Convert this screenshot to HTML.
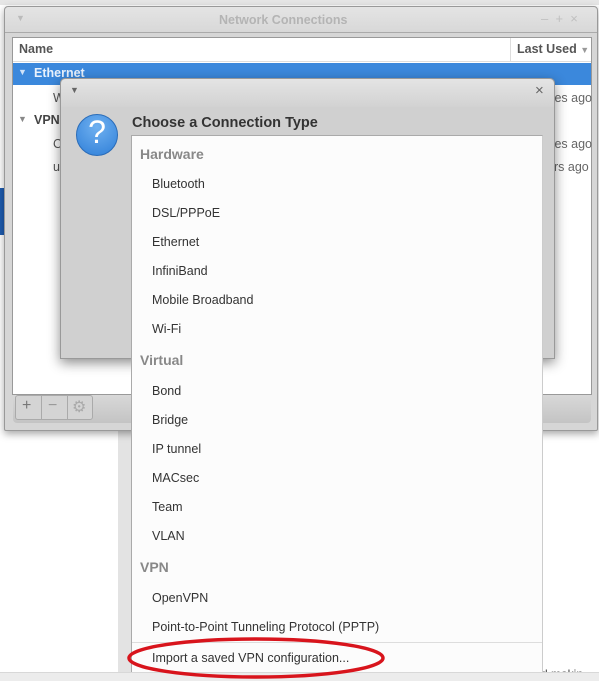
<!DOCTYPE html>
<html><head><meta charset="utf-8"><style>
*{margin:0;padding:0;box-sizing:border-box}
body{width:599px;height:681px;overflow:hidden;background:#fff;position:relative;font-family:"Liberation Sans",sans-serif;font-size:12.5px;color:#333}
.abs{position:absolute}
.t{position:absolute;white-space:nowrap}
</style></head><body>
<div class="abs" style="left:0;top:0;width:599px;height:5px;background:#e6e6e6"></div>
<div class="abs" style="left:118px;top:430px;width:13px;height:242px;background:#e3e3e3"></div>
<div class="abs" style="left:0;top:188px;width:4px;height:47px;background:#1e5cb0"></div>
<div class="t" style="left:541px;top:667px;color:#444;font-size:12px">d makin</div>
<div class="abs" style="left:0;top:672px;width:599px;height:9px;background:#ececec;border-top:1px solid #d8d8d8"></div>
<!-- main window -->
<div class="abs" style="left:4px;top:6px;width:594px;height:425px;background:#d6d6d6;border:1px solid #999;border-radius:4px 4px 2px 2px;box-shadow:0 3px 8px rgba(0,0,0,.35)">
 <div class="abs" style="left:0;top:0;width:592px;height:26px;background:linear-gradient(#e4e4e4,#d8d8d8);border-bottom:1px solid #aaa;border-radius:4px 4px 0 0"></div>
 <div class="t" style="left:11px;top:6px;color:#bbb;font-size:9px">▼</div>
 <div class="t" style="left:214px;top:6px;color:#b4b4b4;font-weight:bold;font-size:12.5px">Network Connections</div>
 <div class="t" style="left:536px;top:4px;color:#c0c0c0;font-size:13px">–&nbsp;&nbsp;+&nbsp;&nbsp;×</div>
 <div class="abs" style="left:7px;top:30px;width:580px;height:358px;background:#fff;border:1px solid #999"></div>
 <div class="abs" style="left:8px;top:31px;width:578px;height:24px;border-bottom:1px solid #ddd"></div>
 <div class="abs" style="left:505px;top:31px;width:1px;height:24px;background:#ddd"></div>
 <div class="t" style="left:14px;top:35px;font-weight:bold;color:#555">Name</div>
 <div class="t" style="left:512px;top:35px;font-weight:bold;color:#555">Last Used <span style="color:#999;font-size:9px">▼</span></div>
 <div class="abs" style="left:8px;top:56px;width:578px;height:22px;background:#3b88dc"></div>
 <div class="t" style="left:13px;top:60px;color:#cfe2f8;font-size:9px">▼</div>
 <div class="t" style="left:29px;top:59px;color:#e8f1fc;font-weight:bold">Ethernet</div>
 <div class="t" style="left:48px;top:84px;color:#555">W</div>
 <div class="t" style="left:13px;top:107px;color:#888;font-size:9px">▼</div>
 <div class="t" style="left:29px;top:106px;font-weight:bold;color:#444">VPN</div>
 <div class="t" style="left:48px;top:130px;color:#555">C</div>
 <div class="t" style="left:48px;top:153px;color:#555">u</div>
 <div class="t" style="left:546px;top:84px;color:#666">tes ago</div>
 <div class="t" style="left:546px;top:130px;color:#666">tes ago</div>
 <div class="t" style="left:549px;top:153px;color:#666">rs ago</div>
 <div class="abs" style="left:8px;top:388px;width:578px;height:28px;background:linear-gradient(#d8d8d8,#c4c4c4);border-radius:0 0 4px 4px"></div>
 <div class="abs" style="left:10px;top:388px;width:78px;height:25px;border:1px solid #aaa;border-radius:3px;background:#d4d4d4"></div>
 <div class="abs" style="left:36px;top:389px;width:1px;height:23px;background:#aaa"></div>
 <div class="abs" style="left:62px;top:389px;width:1px;height:23px;background:#aaa"></div>
 <div class="t" style="left:17px;top:390px;color:#777;font-size:16px">+</div>
 <div class="t" style="left:43px;top:390px;color:#999;font-size:16px">−</div>
 <div class="t" style="left:67px;top:390px;color:#aaa;font-size:16px">⚙</div>
</div>
<!-- dialog -->
<div class="abs" style="left:60px;top:78px;width:495px;height:281px;background:#d0d0d0;border:1px solid #999;border-radius:5px 5px 0 0;box-shadow:0 4px 12px rgba(0,0,0,.45)">
 <div class="abs" style="left:0;top:0;width:493px;height:28px;background:linear-gradient(#e4e4e4,#d2d2d2);border-radius:5px 5px 0 0"></div>
 <div class="t" style="left:9px;top:6px;color:#666;font-size:9px">▼</div>
 <div class="t" style="left:474px;top:3px;color:#666;font-size:15px">×</div>
 <div class="abs" style="left:15px;top:35px;width:42px;height:42px;border-radius:50%;background:radial-gradient(circle at 50% 30%,#6fb0f0,#2f7fd8);border:1px solid #2a6cb8"></div>
 <div class="t" style="left:24px;top:35px;width:24px;text-align:center;color:#fff;font-size:32px">?</div>
 <div class="t" style="left:71px;top:36px;font-weight:bold;font-size:14.5px;color:#333">Choose a Connection Type</div>
</div>
<!-- popup -->
<div class="abs" style="left:131px;top:135px;width:412px;height:537px;background:#fcfcfc;border:1px solid #aaa;border-right-color:#ccc;border-bottom:none">
 <div class="abs" style="left:0;top:506px;width:410px;height:1px;background:#ddd"></div>
</div>
<div class="t" style="left:140px;top:146px;font-weight:bold;color:#888;font-size:14px">Hardware</div>
<div class="t" style="left:152px;top:177px">Bluetooth</div>
<div class="t" style="left:152px;top:206px">DSL/PPPoE</div>
<div class="t" style="left:152px;top:235px">Ethernet</div>
<div class="t" style="left:152px;top:264px">InfiniBand</div>
<div class="t" style="left:152px;top:293px">Mobile Broadband</div>
<div class="t" style="left:152px;top:322px">Wi-Fi</div>
<div class="t" style="left:140px;top:352px;font-weight:bold;color:#888;font-size:14px">Virtual</div>
<div class="t" style="left:152px;top:384px">Bond</div>
<div class="t" style="left:152px;top:413px">Bridge</div>
<div class="t" style="left:152px;top:442px">IP tunnel</div>
<div class="t" style="left:152px;top:471px">MACsec</div>
<div class="t" style="left:152px;top:500px">Team</div>
<div class="t" style="left:152px;top:529px">VLAN</div>
<div class="t" style="left:140px;top:559px;font-weight:bold;color:#888;font-size:14px">VPN</div>
<div class="t" style="left:152px;top:591px">OpenVPN</div>
<div class="t" style="left:152px;top:620px">Point-to-Point Tunneling Protocol (PPTP)</div>
<div class="t" style="left:152px;top:651px">Import a saved VPN configuration...</div>
<svg class="abs" style="left:0;top:0" width="599" height="681"><ellipse cx="256" cy="658" rx="127" ry="19" fill="none" stroke="#d8141c" stroke-width="3.5"/></svg>
</body></html>
